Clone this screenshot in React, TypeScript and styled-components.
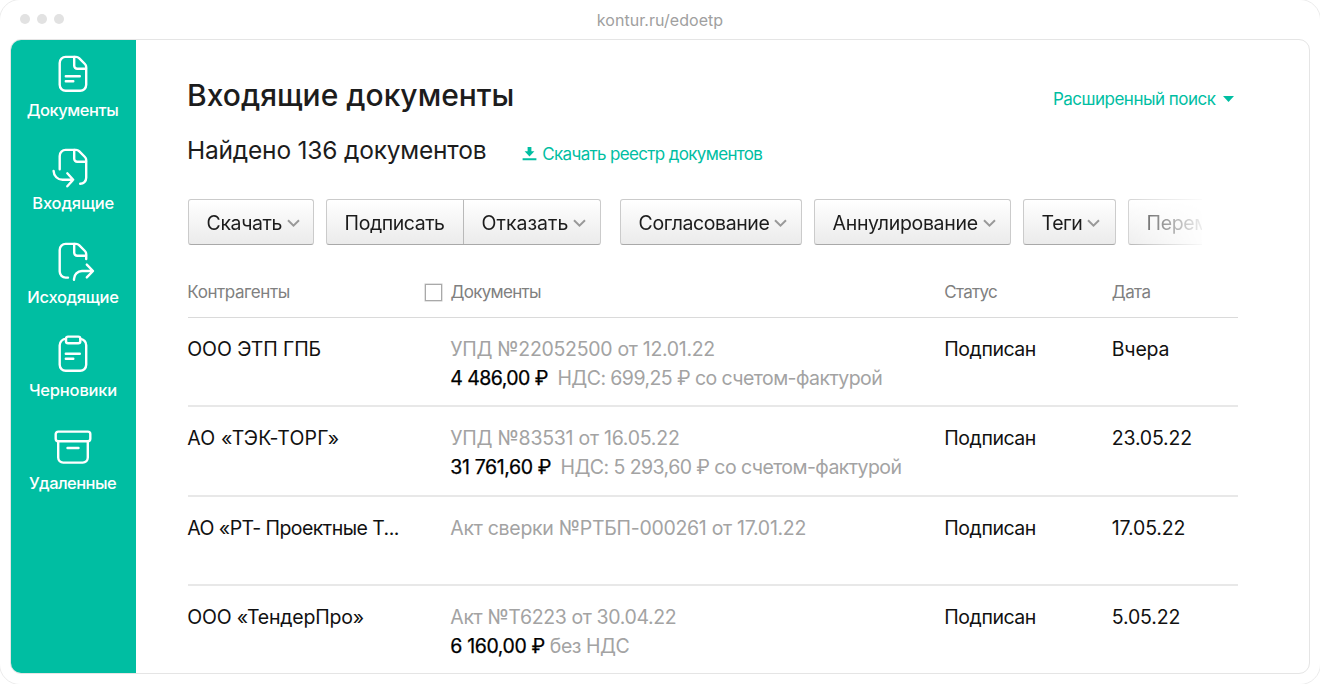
import React from 'react';
import styled, { createGlobalStyle } from 'styled-components';

const GlobalStyle = createGlobalStyle`
  * { box-sizing: border-box; }
  body {
    margin: 0;
    background: #fff;
    overflow: hidden;
    font-family: Inter, "Liberation Sans", sans-serif;
    color: #1c1c1c;
  }
`;

const Window = styled.div`
  width: 1322px;
  height: 686px;
  margin: -1px;
  padding: 0 11px 11px;
  display: flex;
  flex-direction: column;
  border: 1px solid #ececec;
  border-radius: 21px;
`;

const AddressBar = styled.div`
  flex: none;
  height: 39px;
  display: grid;
  grid-template-columns: 1fr auto 1fr;
  align-items: center;
`;

const Dots = styled.div`
  display: flex;
  gap: 7px;
  padding: 0 0 1px 8.5px;
`;

const Dot = styled.i`
  width: 10px;
  height: 10px;
  border-radius: 50%;
  background: #e2e2e2;
`;

const Url = styled.span`
  font-size: 16px;
  line-height: 24px;
  letter-spacing: 0.05px;
  color: #a0a0a0;
  padding-top: 1px;
`;

const Screen = styled.div`
  flex: none;
  width: 1300px;
  height: 635px;
  margin-left: -1px;
  display: flex;
  border: 1px solid #e5e5e5;
  border-radius: 11px;
  overflow: hidden;
`;

const Sidebar = styled.nav`
  flex: none;
  width: 125px;
  background: #00bea2;
  color: #fff;
`;

const NavItem = styled.a`
  display: flex;
  flex-direction: column;
  align-items: center;
  height: 93.3px;
  padding: 12px 2px 0 0;
`;

const NavIcon = styled.svg`
  flex: none;
  width: 44px;
  height: 44px;
  fill: none;
  stroke: #fff;
  stroke-width: 2.4;
  stroke-linecap: round;
  stroke-linejoin: round;
  overflow: visible;
`;

const NavLabel = styled.span<{ $track: number; $shift?: number }>`
  margin-top: 2px;
  padding-left: ${(p) => p.$shift ?? 0}px;
  font-size: 16.5px;
  line-height: 24px;
  font-weight: 500;
  white-space: nowrap;
  letter-spacing: ${(p) => p.$track}px;
`;

const Main = styled.main`
  width: 1102px;
  padding: 34px 0 0 52px;
`;

const TitleRow = styled.header`
  display: flex;
  justify-content: space-between;
  align-items: center;
  height: 41px;
  padding-right: 4px;
`;

const Title = styled.h1`
  margin: 0 0 0 -1px;
  font-size: 30px;
  line-height: 40px;
  font-weight: 500;
  letter-spacing: 0;
`;

const Link = styled.a<{ $track: number; $gap: number }>`
  display: flex;
  align-items: center;
  gap: ${(p) => p.$gap}px;
  font-size: 17px;
  line-height: 24px;
  letter-spacing: ${(p) => p.$track}px;
  color: #00bea2;
  white-space: nowrap;
`;

const SearchLink = styled(Link)`
  margin-top: 9px;
`;

const FoundRow = styled.div`
  display: flex;
  align-items: center;
  gap: 36px;
  height: 32px;
  margin-top: 19px;
`;

const Found = styled.h2`
  margin: 0 0 0 -1px;
  font-size: 24.5px;
  line-height: 32px;
  font-weight: 400;
  letter-spacing: -0.2px;
`;

const DownloadLink = styled(Link)`
  margin-top: 7px;
`;

const Toolbar = styled.div`
  display: flex;
  width: 1014px;
  margin-top: 33px;
  overflow: hidden;
  mask-image: linear-gradient(to right, #000 925px, rgba(0, 0, 0, 0.6) 960px, rgba(0, 0, 0, 0.08) 1014px);
`;

const ButtonGroup = styled.div<{ $after?: number }>`
  display: flex;
  flex: none;
  margin-right: ${(p) => p.$after ?? 12}px;
  border: 1px solid #cbcbcb;
  border-bottom-color: #a9a9a9;
  border-radius: 3px;
  background: linear-gradient(#fff, #ebebeb);
`;

const Button = styled.button<{ $width: number; $track: number }>`
  display: flex;
  align-items: center;
  gap: 5px;
  width: ${(p) => p.$width}px;
  height: 44px;
  padding: 1px 0 0 17.6px;
  border: 0;
  background: none;
  font: 400 19.5px/28px Inter, sans-serif;
  letter-spacing: ${(p) => p.$track}px;
  color: #1c1c1c;
  white-space: nowrap;

  & + & {
    border-left: 1px solid #b9b9b9;
  }
`;

const ChevronIcon = styled.svg`
  flex: none;
  width: 13px;
  height: 8px;
  fill: none;
  stroke: #999;
  stroke-width: 2;
`;

const Row = styled.div`
  display: grid;
  grid-template-columns: 263px 494px 167.5px 1fr;
  width: 1050px;
  height: 89.3px;
  padding-top: 17px;
  border-bottom: 2px solid #e8e8e8;

  &:last-child {
    border-bottom: 0;
  }
`;

const HeadRow = styled(Row)`
  height: 73px;
  padding-top: 35px;
  border-bottom: 1px solid #dadada;
  font-size: 17px;
  line-height: 24px;
  color: #808080;
`;

const DocHead = styled.div`
  display: flex;
  align-items: center;
  height: 24px;
  margin-left: -26px;
  gap: 8.5px;
`;

const Checkbox = styled.span`
  width: 17px;
  height: 17px;
  border: 1px solid #a9a9a9;
  background: #fff;
  box-shadow: 0 0 0 0.5px #c8c8c8;
`;

const Text = styled.span<{ $track: number }>`
  letter-spacing: ${(p) => p.$track}px;
  white-space: pre;
`;

const HeadText = styled(Text)`
  margin-left: -0.7px;
`;

const Cell = styled.div`
  margin-left: -0.7px;
  font-size: 19.5px;
  line-height: 29px;
  white-space: nowrap;
  color: #111;
`;

const DocCell = styled(Cell)`
  color: #a3a3a3;
`;

const Amount = styled(Text)<{ $after: number }>`
  -webkit-text-stroke: 0.25px #000;
  color: #000;
  margin-right: ${(p) => p.$after}px;
`;

const Chevron = () => (
  <ChevronIcon viewBox="0 0 13 8">
    <path d="M1 1.3 6.5 6.6 12 1.3" />
  </ChevronIcon>
);

const FOLD = 'M23.2 5V13.7a3 3 0 0 0 3 3H35';

const nav = [
  {
    label: 'Документы',
    track: -0.45,
    paths: [
      'M14.7 4.9H25Q26.8 4.9 28.1 6.2L33.9 12Q35.2 13.3 35.2 15.1V32.8a6 6 0 0 1-6 6H14.7a6 6 0 0 1-6-6V10.9a6 6 0 0 1 6-6Z',
      FOLD,
      'M14.8 24.3H28.8M14.8 29.3H22.3',
    ],
  },
  {
    label: 'Входящие',
    track: -0.17,
    shift: 1.4,
    paths: [
      'M8.7 24.3V10.9a6 6 0 0 1 6-6H25Q26.8 4.9 28.1 6.2L33.9 12Q35.2 13.3 35.2 15.1V32.8a6 6 0 0 1-6 6',
      FOLD,
      'M2.6 26a9 9 0 0 0 9 8.8H22M16.3 28.3 22.2 34.8 16.3 41.3',
    ],
  },
  {
    label: 'Исходящие',
    track: -0.3,
    shift: 1,
    paths: [
      'M17 38.6H14.7a6 6 0 0 1-6-6V10.9a6 6 0 0 1 6-6H25Q26.8 4.9 28.1 6.2L33.9 12Q35.2 13.3 35.2 15.1V20',
      FOLD,
      'M23 40.8V40a8 8 0 0 1 8-8H41.5M35.8 25.6 42 32 35.8 38.4',
    ],
  },
  {
    label: 'Черновики',
    track: -0.18,
    shift: 1,
    paths: [
      'M15 6.9A6.3 6.3 0 0 0 8.7 13.2V32.8a6 6 0 0 0 6 6H29.2a6 6 0 0 0 6-6V13.2A6.3 6.3 0 0 0 29.3 6.9',
      'M17 4.6H27.3a2 2 0 0 1 2 2V9.2a2 2 0 0 1-2 2H17a2 2 0 0 1-2-2V6.6a2 2 0 0 1 2-2Z',
      'M14.8 21.7H28.8M14.8 26.7H22.3',
    ],
  },
  {
    label: 'Удаленные',
    track: -0.55,
    paths: [
      'M7.2 6.6H36.8a2.5 2.5 0 0 1 2.5 2.5V13.8a2.5 2.5 0 0 1-2.5 2.5H7.2a2.5 2.5 0 0 1-2.5-2.5V9.1a2.5 2.5 0 0 1 2.5-2.5Z',
      'M7.2 16.3V32.6a5 5 0 0 0 5 5H31.8a5 5 0 0 0 5-5V16.3',
      'M16.5 23H27.5',
    ],
  },
];

type Doc = {
  partner: string;
  partnerTrack: number;
  doc: string;
  docTrack: number;
  sum?: { amount: string; track: number; after: number; note: string; noteTrack: number };
  date: string;
  dateTrack: number;
};

const docs: Doc[] = [
  {
    partner: 'ООО ЭТП ГПБ', partnerTrack: -0.1,
    doc: 'УПД №22052500 от 12.01.22', docTrack: -0.3,
    sum: { amount: '4 486,00 ₽', track: -0.55, after: 9.5, note: 'НДС: 699,25 ₽ со счетом-фактурой', noteTrack: -0.57 },
    date: 'Вчера', dateTrack: -0.2,
  },
  {
    partner: 'АО «ТЭК-ТОРГ»', partnerTrack: 0.2,
    doc: 'УПД №83531 от 16.05.22', docTrack: -0.25,
    sum: { amount: '31 761,60 ₽', track: -0.38, after: 9.5, note: 'НДС: 5 293,60 ₽ со счетом-фактурой', noteTrack: -0.57 },
    date: '23.05.22', dateTrack: -0.2,
  },
  {
    partner: 'АО «РТ- Проектные Т...', partnerTrack: -0.55,
    doc: 'Акт сверки №РТБП-000261 от 17.01.22', docTrack: -0.29,
    date: '17.05.22', dateTrack: -0.15,
  },
  {
    partner: 'ООО «ТендерПро»', partnerTrack: -0.2,
    doc: 'Акт №Т6223 от 30.04.22', docTrack: -0.37,
    sum: { amount: '6 160,00 ₽', track: -0.38, after: 5, note: 'без НДС', noteTrack: -0.45 },
    date: '5.05.22', dateTrack: -0.15,
  },
];

export default function App() {
  return (
    <Window>
      <GlobalStyle />
      <AddressBar>
        <Dots><Dot /><Dot /><Dot /></Dots>
        <Url>kontur.ru/edoetp</Url>
      </AddressBar>
      <Screen>
        <Sidebar>
          {nav.map((item) => (
            <NavItem key={item.label}>
              <NavIcon viewBox="0 0 44 44">
                {item.paths.map((d) => <path key={d} d={d} />)}
              </NavIcon>
              <NavLabel $track={item.track} $shift={item.shift}>{item.label}</NavLabel>
            </NavItem>
          ))}
        </Sidebar>
        <Main>
          <TitleRow>
            <Title>Входящие документы</Title>
            <SearchLink $track={-0.5} $gap={7.5}>
              Расширенный поиск
              <svg width="11" height="6" viewBox="0 0 11 6"><path d="M0 0H11L5.5 6Z" fill="#00bea2" /></svg>
            </SearchLink>
          </TitleRow>
          <FoundRow>
            <Found>Найдено 136 документов</Found>
            <DownloadLink $track={-0.66} $gap={5}>
              <svg width="15" height="14" viewBox="0 0 15 14">
                <path d="M5.6 0H9.4V4.2H12.4L7.5 9.6 2.6 4.2H5.6ZM.6 11.2H14.4V13.3H.6Z" fill="#00bea2" />
              </svg>
              Скачать реестр документов
            </DownloadLink>
          </FoundRow>
          <Toolbar>
            <ButtonGroup>
              <Button $width={124} $track={-0.4}>Скачать<Chevron /></Button>
            </ButtonGroup>
            <ButtonGroup $after={19}>
              <Button $width={136} $track={-0.45}>Подписать</Button>
              <Button $width={137} $track={0}>Отказать<Chevron /></Button>
            </ButtonGroup>
            <ButtonGroup>
              <Button $width={180} $track={-0.42}>Согласование<Chevron /></Button>
            </ButtonGroup>
            <ButtonGroup>
              <Button $width={195} $track={-0.33}>Аннулирование<Chevron /></Button>
            </ButtonGroup>
            <ButtonGroup>
              <Button $width={91} $track={-0.5}>Теги<Chevron /></Button>
            </ButtonGroup>
            <ButtonGroup>
              <Button $width={160} $track={-0.35}>Переместить</Button>
            </ButtonGroup>
          </Toolbar>
          <HeadRow>
            <HeadText $track={-0.42}>Контрагенты</HeadText>
            <DocHead>
              <Checkbox />
              <Text $track={-0.7}>Документы</Text>
            </DocHead>
            <HeadText $track={-0.7}>Статус</HeadText>
            <HeadText $track={-0.6}>Дата</HeadText>
          </HeadRow>
          {docs.map((d) => (
            <Row key={d.partner}>
              <Cell><Text $track={d.partnerTrack}>{d.partner}</Text></Cell>
              <DocCell>
                <Text $track={d.docTrack}>{d.doc}</Text>
                {d.sum && (
                  <div>
                    <Amount $track={d.sum.track} $after={d.sum.after}>{d.sum.amount}</Amount>
                    <Text $track={d.sum.noteTrack}>{d.sum.note}</Text>
                  </div>
                )}
              </DocCell>
              <Cell><Text $track={-0.45}>Подписан</Text></Cell>
              <Cell><Text $track={d.dateTrack}>{d.date}</Text></Cell>
            </Row>
          ))}
        </Main>
      </Screen>
    </Window>
  );
}
